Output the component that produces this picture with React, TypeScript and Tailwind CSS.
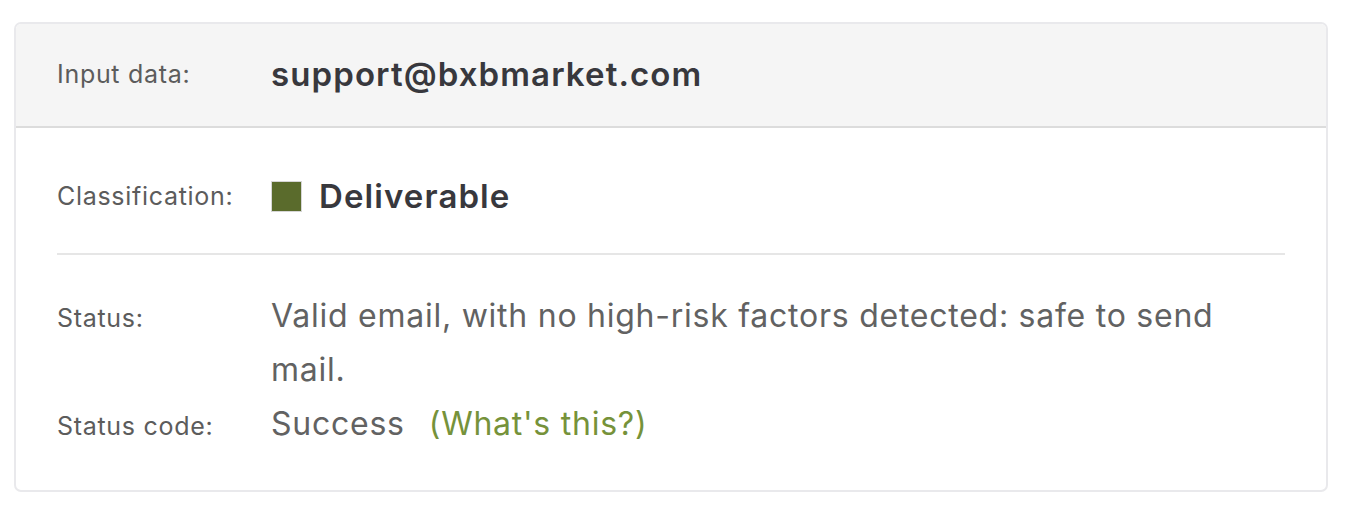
const font = { fontFamily: "Inter, 'Open Sans', sans-serif" };

function Row({ label, children }: { label: string; children: React.ReactNode }) {
  return (
    <div className="flex items-baseline">
      <div className="w-[214px] shrink-0 text-[25px] tracking-[0.7px] text-[#5c5c5c]">{label}</div>
      <div className="flex-1">{children}</div>
    </div>
  );
}

export default function App() {
  return (
    <div className="min-h-screen bg-white pt-[22px] pl-[14px] pr-[20px]" style={font}>
      <div className="rounded-[7px] border-2 border-[#e9e9ec] overflow-hidden">
        <div className="flex items-center h-[104px] bg-[#f5f5f5] border-b-2 border-[#dcdcdc] px-[41px]">
          <div className="w-[214px] shrink-0 text-[25px] tracking-[0.7px] text-[#5c5c5c]">Input data:</div>
          <div className="text-[33px] font-semibold tracking-[1.1px] text-[#38383d]">support@bxbmarket.com</div>
        </div>

        <div className="px-[41px]">
          <div className="flex items-center h-[127px] pt-[12px] border-b-2 border-[#e6e6e6]">
            <div className="w-[214px] shrink-0 text-[25px] tracking-[0.7px] text-[#5c5c5c]">Classification:</div>
            <div className="flex items-center gap-[17px]">
              <span className="w-[31px] h-[31px] bg-[#5a6b2c] border border-[#d6d6d6]" />
              <span className="text-[33px] font-semibold tracking-[1.1px] text-[#38383d]">Deliverable</span>
            </div>
          </div>

          <div className="pt-[34px] pb-[39px]">
            <Row label="Status:">
              <p className="max-w-[990px] text-[32px] tracking-[0.75px] leading-[54px] text-[#626262]">
                Valid email, with no high-risk factors detected: safe to send mail.
              </p>
            </Row>
            <Row label="Status code:">
              <p className="text-[32px] tracking-[0.75px] leading-[54px] text-[#626262]">
                Success
                <a href="#" className="ml-[24px] text-[#76923a]">(What's this?)</a>
              </p>
            </Row>
          </div>
        </div>
      </div>
    </div>
  );
}
